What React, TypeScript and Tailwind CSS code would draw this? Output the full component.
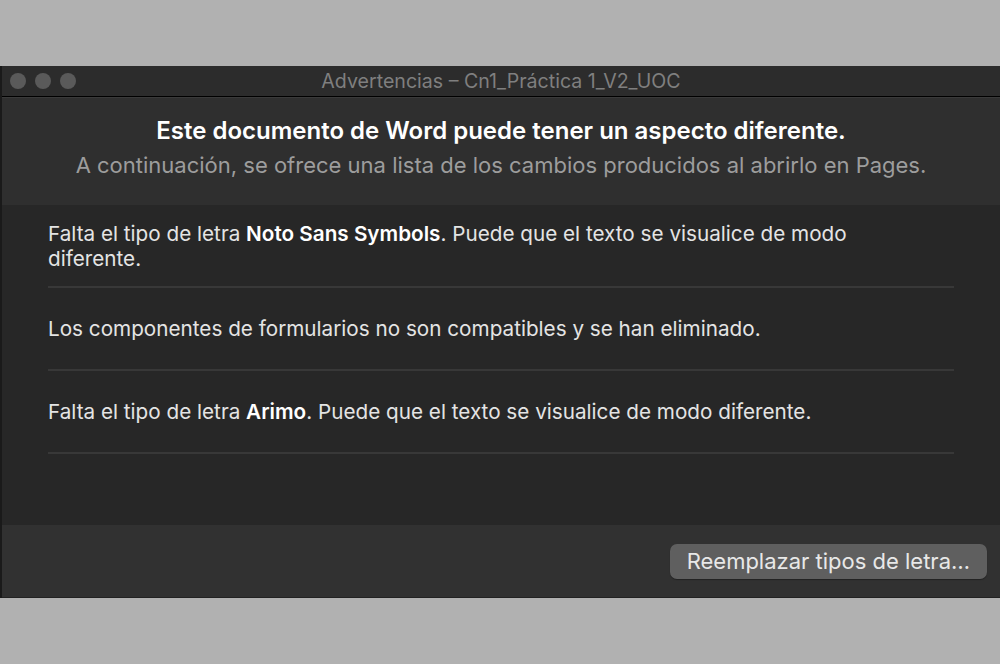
import React from "react";

const items = [
  <>
    Falta el tipo de letra <b className="font-semibold text-white">Noto Sans Symbols</b>. Puede que el texto se visualice de modo
    <br />
    diferente.
  </>,
  <>Los componentes de formularios no son compatibles y se han eliminado.</>,
  <>
    Falta el tipo de letra <b className="font-semibold text-white">Arimo</b>. Puede que el texto se visualice de modo diferente.
  </>,
];

export default function App() {
  return (
    <div className="w-[1000px] h-[664px] bg-[#b1b1b1] flex flex-col pt-[66px] font-['Inter',sans-serif]">
      <div className="h-[532px] flex flex-col bg-[#2e2e2e] border-l-2 border-[#1a1a1a]">
        {/* title bar */}
        <div className="h-[31px] relative flex items-center justify-center bg-[#2c2c2c] border-b border-black">
          <div className="absolute left-[8px] top-[7px] flex gap-[9px]">
            <span className="w-[16px] h-[16px] rounded-full bg-[#5a5a5a]" />
            <span className="w-[16px] h-[16px] rounded-full bg-[#5a5a5a]" />
            <span className="w-[16px] h-[16px] rounded-full bg-[#5a5a5a]" />
          </div>
          <span className="text-[19.6px] text-[#7f7f7f] leading-[24px]">Advertencias – Cn1_Práctica 1_V2_UOC</span>
        </div>

        {/* header */}
        <div className="h-[108px] flex flex-col items-center pt-[18px] bg-[#2f2f2f] border-t border-[#3a3a3a]">
          <h1 className="text-[24px] font-semibold text-white leading-[30px]">
            Este documento de Word puede tener un aspecto diferente.
          </h1>
          <p className="text-[22px] text-[#9d9d9d] leading-[28px] mt-[5px]">
            A continuación, se ofrece una lista de los cambios producidos al abrirlo en Pages.
          </p>
        </div>

        {/* list */}
        <div className="flex-1 bg-[#272727] px-[46px]">
          {items.map((it, i) => (
            <div key={i} className="h-[83px] flex items-center border-b-2 border-[#383838] text-[20.7px] leading-[25px] text-[#e4e4e4]">
              <p>{it}</p>
            </div>
          ))}
        </div>

        {/* footer */}
        <div className="h-[73px] bg-[#313131] flex items-center justify-end pr-[13px] border-b border-[#222]">
          <button className="h-[35px] px-[17px] rounded-[7px] bg-[#5f5f5f] text-[22px] text-[#e8e8e8] shadow-[0_1px_1px_rgba(0,0,0,0.3)]">
            Reemplazar tipos de letra…
          </button>
        </div>
      </div>
    </div>
  );
}
